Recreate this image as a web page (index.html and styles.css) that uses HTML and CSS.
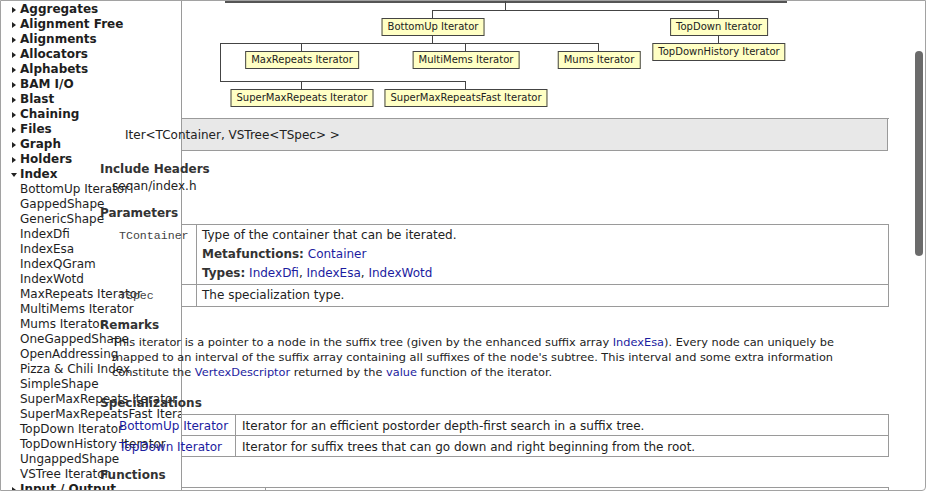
FILE: index.html
```html
<!DOCTYPE html>
<html lang="en">
<head>
<meta charset="utf-8">
<title>VSTree Iterator</title>
<link rel="stylesheet" href="styles.css">
</head>
<body>
<div class="window">
  <nav class="sidebar">
    <ul class="nav">
      <li class="cat"><span class="tog"></span>Aggregates</li>
      <li class="cat"><span class="tog"></span>Alignment Free</li>
      <li class="cat"><span class="tog"></span>Alignments</li>
      <li class="cat"><span class="tog"></span>Allocators</li>
      <li class="cat"><span class="tog"></span>Alphabets</li>
      <li class="cat"><span class="tog"></span>BAM I/O</li>
      <li class="cat"><span class="tog"></span>Blast</li>
      <li class="cat"><span class="tog"></span>Chaining</li>
      <li class="cat"><span class="tog"></span>Files</li>
      <li class="cat"><span class="tog"></span>Graph</li>
      <li class="cat"><span class="tog"></span>Holders</li>
      <li class="cat open"><span class="tog"></span>Index</li>
      <li class="sub">BottomUp Iterator</li>
      <li class="sub">GappedShape</li>
      <li class="sub">GenericShape</li>
      <li class="sub">IndexDfi</li>
      <li class="sub">IndexEsa</li>
      <li class="sub">IndexQGram</li>
      <li class="sub">IndexWotd</li>
      <li class="sub">MaxRepeats Iterator</li>
      <li class="sub">MultiMems Iterator</li>
      <li class="sub">Mums Iterator</li>
      <li class="sub">OneGappedShape</li>
      <li class="sub">OpenAddressing</li>
      <li class="sub">Pizza &amp; Chili Index</li>
      <li class="sub">SimpleShape</li>
      <li class="sub">SuperMaxRepeats Iterator</li>
      <li class="sub">SuperMaxRepeatsFast Iterator</li>
      <li class="sub">TopDown Iterator</li>
      <li class="sub">TopDownHistory Iterator</li>
      <li class="sub">UngappedShape</li>
      <li class="sub">VSTree Iterator</li>
      <li class="cat"><span class="tog"></span>Input / Output</li>
    </ul>
  </nav>

  <main class="content">
    <div class="hier">
      <span class="parent-edge"></span>
      <svg class="edges" width="707" height="117" viewBox="0 0 707 117">
        <path d="M324.5 0V9.5 M251 9.5H538 M251.5 9.5V17 M537.5 9.5V17
                 M251.5 34V42 M39 42.5H418 M120.5 42.5V50 M284.5 42.5V50 M417.5 42.5V50
                 M39.5 42.5V80.5 M39 80.5H285 M120.5 80.5V88 M284.5 80.5V88
                 M537.5 34V42" fill="none" stroke="#444" stroke-width="1"/>
      </svg>
      <div class="node n-bottomup">BottomUp Iterator</div>
      <div class="node n-topdown">TopDown Iterator</div>
      <div class="node n-maxrep">MaxRepeats Iterator</div>
      <div class="node n-multimems">MultiMems Iterator</div>
      <div class="node n-mums">Mums Iterator</div>
      <div class="node n-tdhist">TopDownHistory Iterator</div>
      <div class="node n-smr">SuperMaxRepeats Iterator</div>
      <div class="node n-smrf">SuperMaxRepeatsFast Iterator</div>
    </div>

    <div class="signature">Iter&lt;TContainer, VSTree&lt;TSpec&gt; &gt;</div>

    <h2 class="sec">Include Headers</h2>
    <div class="include">seqan/index.h</div>

    <h2 class="sec">Parameters</h2>
    <div class="params">
      <div class="pname"><span class="code">TContainer</span></div>
      <div class="pdesc">
        <div class="pline">Type of the container that can be iterated.</div>
        <div class="pline more"><b>Metafunctions:</b> <a href="#">Container</a></div>
        <div class="pline more"><b>Types:</b> <a href="#">IndexDfi</a>, <a href="#">IndexEsa</a>, <a href="#">IndexWotd</a></div>
      </div>
      <div class="pname"><span class="code">TSpec</span></div>
      <div class="pdesc">
        <div class="pline">The specialization type.</div>
      </div>
    </div>

    <h2 class="sec">Remarks</h2>
    <p class="remarks">This iterator is a pointer to a node in the suffix tree (given by the enhanced suffix array <a href="#">IndexEsa</a>). Every node can uniquely be<br>mapped to an interval of the suffix array containing all suffixes of the node's subtree. This interval and some extra information<br>constitute the <a href="#">VertexDescriptor</a> returned by the <a href="#">value</a> function of the iterator.</p>

    <h2 class="sec">Specializations</h2>
    <div class="specs">
      <div class="sname"><a href="#">BottomUp Iterator</a></div>
      <div class="sdesc">Iterator for an efficient postorder depth-first search in a suffix tree.</div>
      <div class="sname"><a href="#">TopDown Iterator</a></div>
      <div class="sdesc">Iterator for suffix trees that can go down and right beginning from the root.</div>
    </div>

    <h2 class="sec">Functions</h2>
    <div class="funcs">
      <div class="fname"></div>
      <div class="fdesc"></div>
    </div>
  </main>

  <div class="scroll-thumb"></div>
</div>
</body>
</html>
```

FILE: styles.css
```css
html, body {
  margin: 0;
  padding: 0;
  background: #fff;
}

body {
  font-family: "DejaVu Sans", Verdana, sans-serif;
  font-size: 12px;
  color: #222;
}

.window {
  position: relative;
  width: 926px;
  height: 491px;
  box-sizing: border-box;
  border: 1px solid #a2a2a2;
  border-bottom-right-radius: 4px;
  overflow: hidden;
  display: grid;
  grid-template-columns: 181px 1fr;
  grid-template-rows: 489px;
}

/* ---------- sidebar ---------- */
.sidebar {
  grid-area: 1 / 1 / 2 / 2;
  box-sizing: border-box;
  border-right: 1px solid #9a9a9a;
  overflow: hidden;
  min-height: 0;
}

.nav {
  list-style: none;
  margin: 0;
  padding: 1px 0 0;
}

.nav li {
  height: 15px;
  line-height: 15px;
  white-space: nowrap;
  color: #1e1e1e;
}

.cat {
  display: flex;
  align-items: center;
  font-weight: bold;
}

.tog {
  flex: none;
  width: 19px;
  height: 15px;
  box-sizing: border-box;
  display: flex;
  align-items: center;
  justify-content: flex-end;
  padding-right: 4px;
}

.tog::before {
  content: "";
  width: 0;
  height: 0;
  border-top: 3.5px solid transparent;
  border-bottom: 3.5px solid transparent;
  border-left: 4px solid #222;
}

.open .tog {
  padding-right: 3px;
}

.open .tog::before {
  border-left: 3.5px solid transparent;
  border-right: 3.5px solid transparent;
  border-top: 4px solid #222;
  border-bottom: 0;
}

.sub {
  padding-left: 19px;
}

/* ---------- main ---------- */
.content {
  grid-area: 1 / 1 / 2 / 3;
  min-height: 0;
  overflow: hidden;
  padding: 0 36px 0 99px;
  display: flex;
  flex-direction: column;
}

.hier {
  position: relative;
  flex: none;
  margin-left: 81px;
  height: 117px;
  border-bottom: 1px solid #9a9a9a;
}

.parent-edge {
  position: absolute;
  left: 44px;
  top: 0;
  width: 562px;
  height: 2px;
  background: #555;
}

.edges {
  position: absolute;
  left: 0;
  top: 0;
  shape-rendering: crispEdges;
}

.node {
  position: absolute;
  transform: translateX(-50%);
  box-sizing: border-box;
  height: 18px;
  line-height: 16px;
  padding: 0 5px;
  border: 1px solid #444;
  background: #ffffc4;
  font-size: 10px;
  color: #222;
  white-space: nowrap;
}

.n-bottomup { left: 252px; top: 17px; }
.n-topdown { left: 538px; top: 17px; }
.n-maxrep { left: 121px; top: 50px; }
.n-multimems { left: 285px; top: 50px; }
.n-mums { left: 418px; top: 50px; }
.n-tdhist { left: 538px; top: 42px; }
.n-smr { left: 121px; top: 88px; }
.n-smrf { left: 285px; top: 88px; }

.signature {
  flex: none;
  margin: 0 1px 0 81px;
  height: 30px;
  padding-top: 1px;
  line-height: 30px;
  border: 1px solid #9a9a9a;
  border-top: 0;
  background: #e8e8e8;
  text-indent: -57px;
  white-space: nowrap;
  color: #222;
}

.sec {
  flex: none;
  margin: 9px 0 4px;
  padding-top: 2px;
  font-size: 12px;
  line-height: 14px;
  font-weight: bold;
  color: #333;
}

.include {
  margin: -2px 0 1px 12px;
  padding-top: 1px;
  line-height: 15px;
}

a {
  color: #1c1ca0;
  text-decoration: none;
}

b {
  color: #333;
}

.code {
  display: block;
  font-family: "Liberation Mono", "Courier New", monospace;
  font-size: 11.6px;
  color: #444;
  white-space: nowrap;
}

/* parameters table */
.params {
  display: grid;
  grid-template-columns: 15px 1fr;
  margin-left: 81px;
  border: 1px solid #9a9a9a;
  border-bottom: 0;
}

.pname,
.pdesc {
  box-sizing: border-box;
  border-bottom: 1px solid #9a9a9a;
}

.pname {
  border-right: 1px solid #9a9a9a;
  padding-top: 3px;
}

.pname .code {
  margin-left: -63px;
  line-height: 16px;
}

.pdesc {
  padding: 2px 5px 2px;
}

.pline {
  line-height: 17px;
}

.pline.more {
  margin-top: 2px;
}

.remarks {
  margin: -1px 0 5px 12px;
  font-size: 11.35px;
  line-height: 15px;
  white-space: nowrap;
}

/* specializations table */
.specs {
  display: grid;
  grid-template-columns: 54px 1fr;
  margin-left: 81px;
  border: 1px solid #9a9a9a;
  border-bottom: 0;
}

.sname,
.sdesc {
  box-sizing: border-box;
  border-bottom: 1px solid #9a9a9a;
  padding: 3px 0 1px;
  line-height: 16px;
  white-space: nowrap;
}

.sname {
  border-right: 1px solid #9a9a9a;
}

.sname a {
  display: block;
  margin-left: -63px;
}

.sdesc {
  padding-left: 6px;
}

/* functions table */
.funcs {
  flex: none;
  display: grid;
  grid-template-columns: 84px 1fr;
  margin: 1px 0 0 81px;
  border: 1px solid #9a9a9a;
  border-bottom: 0;
  height: 40px;
}

.fname {
  border-right: 1px solid #9a9a9a;
}

/* overlay scrollbar */
.scroll-thumb {
  position: absolute;
  left: 914px;
  top: 50px;
  width: 8px;
  height: 205px;
  border-radius: 4px;
  background: #6b6b6b;
}
```
